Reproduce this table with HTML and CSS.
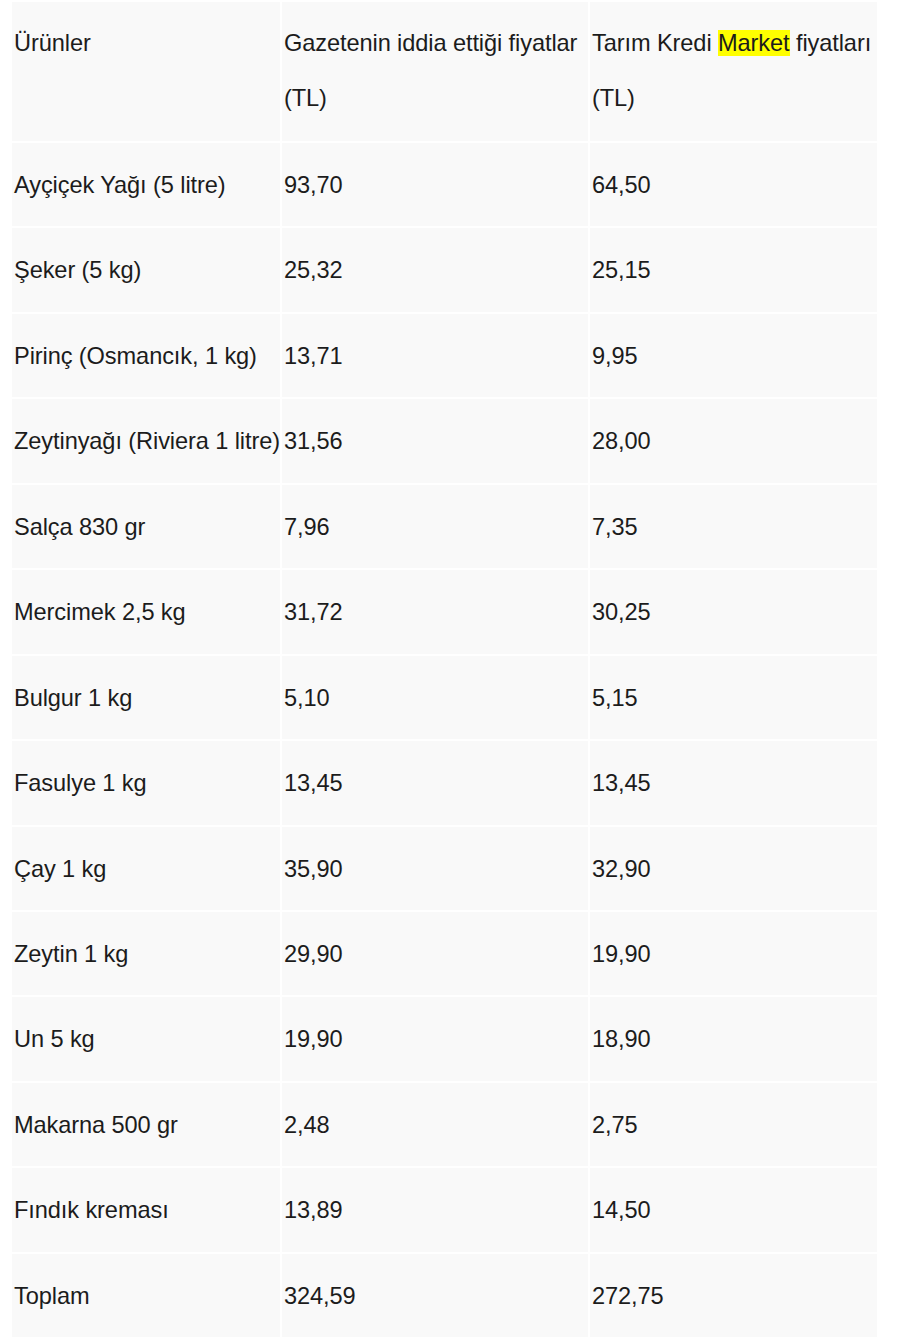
FILE: index.html
```html
<!DOCTYPE html>
<html lang="tr">
<head>
<meta charset="utf-8">
<title>Fiyat karşılaştırması</title>
<link rel="stylesheet" href="styles.css">
</head>
<body>
<table class="prices">
  <colgroup>
    <col class="c1"><col class="c2"><col class="c3">
  </colgroup>
  <tr class="head">
    <td>Ürünler</td>
    <td>Gazetenin iddia ettiği fiyatlar<br>(TL)</td>
    <td>Tarım Kredi <mark class="hl">Market</mark> fiyatları<br>(TL)</td>
  </tr>
  <tr><td>Ayçiçek Yağı (5 litre)</td><td>93,70</td><td>64,50</td></tr>
  <tr><td>Şeker (5 kg)</td><td>25,32</td><td>25,15</td></tr>
  <tr><td>Pirinç (Osmancık, 1 kg)</td><td>13,71</td><td>9,95</td></tr>
  <tr><td>Zeytinyağı (Riviera 1 litre)</td><td>31,56</td><td>28,00</td></tr>
  <tr><td>Salça 830 gr</td><td>7,96</td><td>7,35</td></tr>
  <tr><td>Mercimek 2,5 kg</td><td>31,72</td><td>30,25</td></tr>
  <tr><td>Bulgur 1 kg</td><td>5,10</td><td>5,15</td></tr>
  <tr><td>Fasulye 1 kg</td><td>13,45</td><td>13,45</td></tr>
  <tr><td>Çay 1 kg</td><td>35,90</td><td>32,90</td></tr>
  <tr><td>Zeytin 1 kg</td><td>29,90</td><td>19,90</td></tr>
  <tr><td>Un 5 kg</td><td>19,90</td><td>18,90</td></tr>
  <tr><td>Makarna 500 gr</td><td>2,48</td><td>2,75</td></tr>
  <tr><td>Fındık kreması</td><td>13,89</td><td>14,50</td></tr>
  <tr><td>Toplam</td><td>324,59</td><td>272,75</td></tr>
</table>
</body>
</html>
```
FILE: styles.css
```css
html, body {
  margin: 0;
  padding: 0;
  background: #ffffff;
}

body {
  font-family: "Liberation Sans", Arial, sans-serif;
  color: #1c1c1c;
}

.prices {
  margin: 0 0 0 10px;
  border-collapse: separate;
  border-spacing: 2px;
  table-layout: fixed;
  width: 869px;
}

.c1 { width: 268px; }
.c2 { width: 306px; }
.c3 { width: 287px; }

.prices td {
  background: #f9f9f9;
  padding: 15px 0 13px 2px;
  font-size: 23.6px;
  letter-spacing: -0.1px;
  line-height: 55.45px;
  vertical-align: top;
  white-space: nowrap;
  overflow: visible;
}

.prices .head td {
  padding-top: 14px;
  padding-bottom: 14px;
}

.hl {
  background: #ffff00;
  color: #1c1c1c;
}
```
